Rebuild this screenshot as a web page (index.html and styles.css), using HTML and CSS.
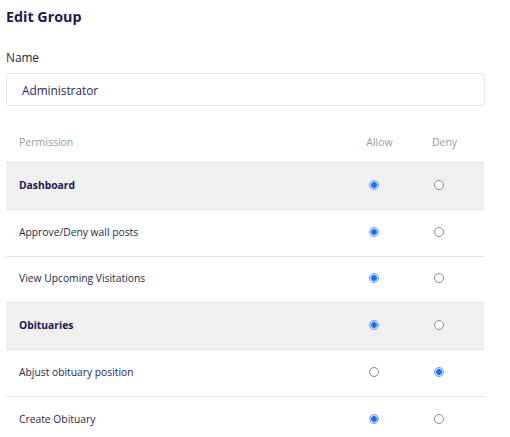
FILE: index.html
```html
<!DOCTYPE html>
<html>
<head>
<meta charset="utf-8">
<link rel="stylesheet" href="styles.css">
</head>
<body>
<div class="page">
  <h1 class="title">Edit Group</h1>
  <label class="field-label">Name</label>
  <div class="input">Administrator</div>
  <div class="table">
    <div class="row head">
      <div class="cell name">Permission</div>
      <div class="cell opt">Allow</div>
      <div class="cell opt">Deny</div>
    </div>
    <div class="row group">
      <div class="cell name">Dashboard</div>
      <div class="cell opt"><span class="radio on"></span></div>
      <div class="cell opt"><span class="radio"></span></div>
    </div>
    <div class="row">
      <div class="cell name">Approve/Deny wall posts</div>
      <div class="cell opt"><span class="radio on"></span></div>
      <div class="cell opt"><span class="radio"></span></div>
    </div>
    <div class="row">
      <div class="cell name">View Upcoming Visitations</div>
      <div class="cell opt"><span class="radio on"></span></div>
      <div class="cell opt"><span class="radio"></span></div>
    </div>
    <div class="row group">
      <div class="cell name">Obituaries</div>
      <div class="cell opt"><span class="radio on"></span></div>
      <div class="cell opt"><span class="radio"></span></div>
    </div>
    <div class="row">
      <div class="cell name">Abjust obituary position</div>
      <div class="cell opt"><span class="radio"></span></div>
      <div class="cell opt"><span class="radio on"></span></div>
    </div>
    <div class="row">
      <div class="cell name">Create Obituary</div>
      <div class="cell opt"><span class="radio on"></span></div>
      <div class="cell opt"><span class="radio"></span></div>
    </div>
  </div>
</div>
</body>
</html>
```

FILE: styles.css
```css
* { box-sizing: border-box; }
html, body { margin: 0; padding: 0; background: #fff; }
body {
  font-family: "Open Sans", "Noto Sans", sans-serif;
  color: #27274f;
  overflow: hidden;
}
.page {
  padding: 7px 25px 0 6px;
}
.title {
  margin: 0;
  font-size: 14.3px;
  line-height: 20px;
  font-weight: 700;
  color: #1f1a4f;
}
.field-label {
  display: block;
  margin-top: 22px;
  font-size: 11.8px;
  line-height: 16px;
  color: #2a2a3e;
}
.input {
  margin-top: 8px;
  height: 33px;
  border: 1px solid #e6e6e6;
  border-radius: 3px;
  padding: 0 15px;
  display: flex;
  align-items: center;
  font-size: 11.8px;
  color: #2a2466;
}
.table {
  margin-top: 16px;
  width: 478px;
}
.row {
  display: grid;
  grid-template-columns: 1fr 65px 65px;
  padding-right: 7px;
  padding-bottom: 2px;
  height: 46.8px;
  border-bottom: 1px solid #e3e3e3;
  align-items: center;
  font-size: 10.3px;
}
.row.head {
  height: 41px;
  padding-bottom: 0;
  font-size: 10.5px;
  color: #9b9b9b;
  border-bottom: 1px solid #e0e0e0;
}
.row.group {
  background: #f0f0f0;
  font-weight: 700;
  color: #1d1650;
}
.cell.name {
  padding-left: 13px;
}
.cell.opt {
  text-align: center;
  display: flex;
  justify-content: center;
}
.radio {
  display: block;
  width: 10px;
  height: 10px;
  border-radius: 50%;
  border: 1px solid #8c8c8c;
  background: #fff;
  margin-right: 11px;
}
.radio.on {
  border: 1px solid #6d9ff5;
  background: radial-gradient(circle, #1f6ef2 0 2.6px, #c9dcfc 3.1px);
}
```
